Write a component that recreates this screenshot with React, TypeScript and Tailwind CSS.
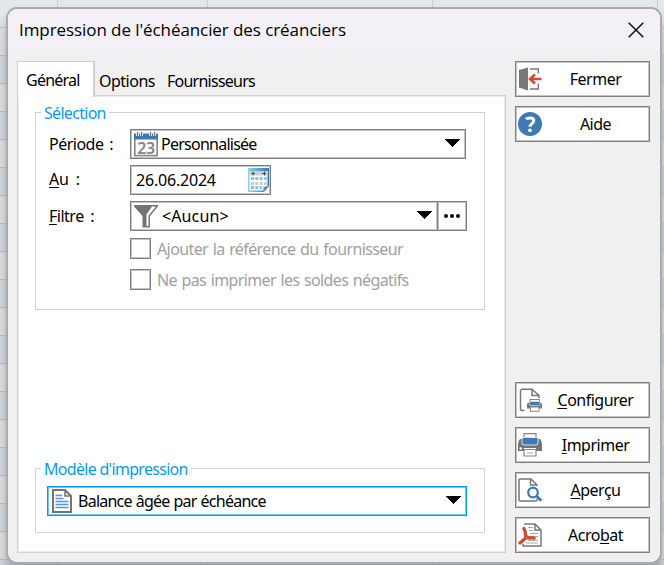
import { ReactNode } from "react";

const ui = "font-['Noto_Sans','Open_Sans',sans-serif]";
const rows = Array.from({ length: 21 }, (_, i) => i);

function Backdrop() {
  return (
    <div className="absolute inset-0 overflow-hidden bg-[#dfe5e8]">
      {rows.map((i) => (
        <div
          key={i}
          className={
            "h-7 border-b border-dotted border-[#b9bcbf] " +
            (i === 0 ? "bg-[#e2e9ec]" : i % 2 ? "bg-[#e8e8e8]" : "bg-[#dae0e6]")
          }
        />
      ))}
      <div className="absolute inset-y-0 left-[57px] w-px bg-[#c9ced2]" />
      <div className="absolute inset-y-0 left-[207px] w-px bg-[#c9ced2]" />
      <div className="absolute inset-y-0 left-[432px] w-px bg-[#c9ced2]" />
      <div className="absolute inset-y-0 left-[657px] w-px bg-[#c9ced2]" />
    </div>
  );
}

function ExitIcon() {
  return (
    <svg width="24" height="24" viewBox="0 0 24 24" className="shrink-0">
      <path d="M1 3 L10 0.5 V23.5 L1 20.5Z" fill="#777" />
      <path d="M12 2h8.300v4.500M12 22h8.300v-5.500" fill="none" stroke="#777" strokeWidth="1.400" />
      <path d="M12 12h11.500M17 7.500l-5 4.500 5 4.500" fill="none" stroke="#d14b32" strokeWidth="2.600" />
    </svg>
  );
}
function HelpIcon() {
  return (
    <svg width="24" height="24" viewBox="0 0 24 24" className="shrink-0">
      <circle cx="12" cy="12" r="12" fill="#3e78b5" />
      <path d="M8 7.200C9.500 5.800 15.800 5 15.800 8.800c0 2.900-3.800 2.800-3.800 6" fill="none" stroke="#fff" strokeWidth="3" />
      <circle cx="12" cy="18.300" r="1.900" fill="#fff" />
    </svg>
  );
}
function ConfigIcon() {
  return (
    <svg width="24" height="24" viewBox="0 0 24 24" className="shrink-0">
      <path d="M6.500 22.500H4Q2.500 22.500 2.500 21V3Q2.500 1.200 4 1.200H14L21 7.500V10M14 1.200V7.500H21" fill="none" stroke="#777" strokeWidth="1.500" />
      <path d="M11 14.500h11q2 0 2 2v4h-15v-4q0-2 2-2z" fill="#777" />
      <rect x="12" y="11.500" width="9.500" height="3" fill="#fff" stroke="#888" />
      <path d="M11.500 13.500h10.500v2.500q0 1.500-1.500 1.500h-7.500q-1.500 0-1.500-1.500z" fill="#3e78b5" stroke="#fff" strokeWidth=".5" />
      <rect x="12.500" y="19" width="8.500" height="4.300" fill="#fff" stroke="#888" />
    </svg>
  );
}
function PrintIcon() {
  return (
    <svg width="24" height="24" viewBox="0 0 24 24" className="shrink-0">
      <path d="M2 6h20q2 2 2 5v7h-6v-3H6v3H0v-7q0-3 2-5z" fill="#747474" />
      <path d="M6 .7h12v4H6z" fill="#fff" stroke="#858585" strokeWidth="1.200" />
      <path d="M4 4.500h16v5.500q0 2-2 2H6q-2 0-2-2z" fill="#3e78b5" stroke="#fff" strokeWidth=".8" />
      <circle cx="2.700" cy="15.500" r="1.200" fill="#fff" />
      <path d="M6 16.500h12v6.500H6z" fill="#fff" stroke="#858585" strokeWidth="1.200" />
      <path d="M9 20h6" stroke="#aaa" />
    </svg>
  );
}
function PreviewIcon() {
  return (
    <svg width="24" height="24" viewBox="0 0 24 24" className="shrink-0">
      <path d="M19 8V7L13 1H2Q1 1 1 2V22Q1 23 2 23H18Q19 23 19 22V21M12.500 1V7H19" fill="none" stroke="#777" strokeWidth="1.500" />
      <circle cx="15" cy="14.500" r="4.800" fill="#fff" stroke="#3e78b5" strokeWidth="2.200" />
      <path d="M18.500 18l4.800 4.800" stroke="#3e78b5" strokeWidth="2.800" />
    </svg>
  );
}
function PdfIcon() {
  return (
    <svg width="24" height="24" viewBox="0 0 24 24" className="shrink-0">
      <path d="M5 1H17L23 7V23H5z" fill="#fff" />
      <path d="M6 1H17L23 7V23H5V21M17 1V7H23" fill="none" stroke="#777" strokeWidth="1.500" />
      <path d="M10 4.500h5M11 7.500h4M12 10.500h8M15 13.500h5M10 17.500h10M8 20h12" stroke="#aaa" />
      <path d="M7.500 11.500C9 14 10.500 14.500 12 15C9.500 15 7 16 5.500 17C7 14.500 7.500 13 7.500 11.500z" fill="#fff" stroke="#d14b32" strokeWidth="2" strokeLinejoin="round" />
      <path d="M7.500 12Q7.500 8 6 5.500M11.500 15Q14 14.500 16 15.200M5.500 17L2 20" fill="none" stroke="#d14b32" strokeWidth="3.400" strokeLinecap="round" />
    </svg>
  );
}
function DayIcon() {
  return (
    <svg width="24" height="26" viewBox="0 0 24 26" className="shrink-0">
      <rect x=".8" y="4" width="22.400" height="20.600" fill="#fff" stroke="#858585" strokeWidth="1.600" />
      <rect y="2.500" width="24" height="6" fill="#3e78b5" />
      <path d="M3.500 1v4M7.500 1v4M16.500 1v4M20.500 1v4" stroke="#fff" strokeWidth="2.800" />
      <path d="M3.500 1v4M7.500 1v4M16.500 1v4M20.500 1v4" stroke="#777" strokeWidth="1.300" />
      <text x="12" y="22.500" textAnchor="middle" fontFamily="Noto Sans" fontWeight="600" fontSize="16" fill="#858585">23</text>
    </svg>
  );
}
function FunnelIcon() {
  return (
    <svg width="24" height="24" viewBox="0 0 24 24" className="shrink-0">
      <path d="M0 1H24V2.500L16 12V23.500H8.500V12L0 2.500Z" fill="#747474" />
      <path d="M18 2.500H22L14.500 11.500V22H12.500V10.500Z" fill="#fff" />
    </svg>
  );
}
function DatePickerIcon() {
  return (
    <svg width="22" height="24" viewBox="0 0 22 24" className="shrink-0">
      <defs>
        <linearGradient id="frame" x1="0" y1="0" x2="1" y2="0">
          <stop offset="0" stopColor="#8ed4e8" />
          <stop offset="1" stopColor="#2f77bd" />
        </linearGradient>
      </defs>
      <path d="M0 0H21V18L16 24H0Z" fill="url(#frame)" />
      <path d="M1.500 3H19.500V18L15 22.500H1.500Z" fill="#fff" />
      <rect x="1.500" y="3" width="18" height="4.500" fill="#cfcfcf" />
      <path d="M3.500 5.500h3.500M14 5.500h4M5 3.500v4M16.500 3.500v4" stroke="#444" />
      <path d="M3 10.500h16" stroke="#94bbf8" strokeWidth="3" strokeDasharray="3 1.300" />
      <path d="M3 15.500h16" stroke="#cecece" strokeWidth="3" strokeDasharray="3 1.300" />
      <path d="M3 19.500h11" stroke="#94bbf8" strokeWidth="3" strokeDasharray="3 1.300" />
      <path d="M14 23q2-1 1.500-4.500 3 .5 5-1z" fill="#777" />
    </svg>
  );
}
function DocIcon() {
  return (
    <svg width="20" height="24" viewBox="0 0 20 24" className="shrink-0">
      <path d="M1 1H13L19 7V23H1Z" fill="#fff" stroke="#747474" strokeWidth="2" />
      <path d="M13 1V7H19" fill="none" stroke="#747474" strokeWidth="1.600" />
      <path d="M3.500 6.500h6.500M3.500 9.500h8M3.500 12.500h13M3.500 15.500h13M3.500 18.500h13" stroke="#5a92c8" strokeWidth="1.700" />
    </svg>
  );
}
function Arrow() {
  return (
    <svg width="16" height="10" viewBox="0 0 16 10" shapeRendering="crispEdges" className="shrink-0">
      <path d="M0 0H16L8 8Z" fill="#000" />
    </svg>
  );
}

function SideButton({ icon, children }: { icon: ReactNode; children: ReactNode }) {
  return (
    <button className="flex h-9 w-[135px] shrink-0 items-center border border-[#808080] bg-white pl-[2px] shadow-[inset_0_0_0_1px_#c4c4c4]">
      {icon}
      <span className="flex-1 text-center">{children}</span>
    </button>
  );
}

const box = "flex items-center border border-[#7f7f7f] bg-white shadow-[inset_0_0_0_1px_#c4c4c4]";

function Group({ title, className, children }: { title: string; className: string; children: ReactNode }) {
  return (
    <section className={"relative border border-[#d0d0d0] " + className}>
      <h2 className="absolute -top-[11px] left-[5px] bg-white px-[3px] leading-[22px] tracking-[-0.700px] whitespace-nowrap text-[#0a9be3]">
        {title}
      </h2>
      {children}
    </section>
  );
}

export default function App() {
  return (
    <main className="relative h-[565px] w-[664px] overflow-hidden">
      <Backdrop />
      <div className={"absolute top-[7px] left-[6px] flex h-[557px] w-[656px] flex-col overflow-hidden rounded-[11px] border-2 border-[#a9acae] bg-[#f0f0f0] text-[16px] tracking-[-0.500px] text-black shadow-[0_12px_14px_rgba(0,0,0,0.300)] " + ui}>
        <header className="flex h-[43px] shrink-0 items-center justify-between bg-[#f3f0f8] pr-[16px] pb-[2px] pl-[11px]">
          <h1 className="font-['Open_Sans','Noto_Sans',sans-serif] text-[17px] tracking-[-0.080px]">
            Impression de l'échéancier des créanciers
          </h1>
          <svg width="16" height="16" viewBox="0 0 16 16">
            <path d="M.7.7l14.600 14.600M15.300.7L.7 15.300" stroke="#111" strokeWidth="1.500" />
          </svg>
        </header>
        <div className="flex flex-1 pt-[9px] pl-[9px]">
          <div className="flex w-[489px] flex-col">
            <nav className="z-10 flex h-[34px]">
              <div className="-mb-[2px] h-[36px] w-[78px] border border-r-2 border-b-0 border-[#d0d0d0] bg-white pt-[6px] pl-[8px] leading-[24px] tracking-[-0.750px]">Général</div>
              <div className="pt-[8px] pl-[4px] leading-[24px]">Options</div>
              <div className="pt-[8px] pl-[12px] leading-[24px] tracking-[-0.750px]">Fournisseurs</div>
            </nav>
            <div className="h-[458px] border border-[#d0d0d0] bg-white pt-[16px] pl-[17px] shadow-[inset_0_0_0_1px_#ececec]">
              <Group title="Sélection" className="h-[198px] w-[450px] pt-[16px] pl-[13px]">
                <div className="flex h-[30px] items-center">
                  <label className="w-[81px] [word-spacing:2px]">Période :</label>
                  <div className={box + " h-[30px] w-[336px] pr-[5px] pl-[3px]"}>
                    <DayIcon />
                    <span className="flex-1 pl-[3px] tracking-[-0.750px]">Personnalisée</span>
                    <Arrow />
                  </div>
                </div>
                <div className="mt-[6px] flex h-[30px] items-center">
                  <label className="w-[81px] pb-[3px] tracking-[-0.200px] [word-spacing:3px]"><u className="underline-offset-2">A</u>u :</label>
                  <div className={box + " h-[30px] w-[141px] pl-[5px]"}>
                    <span className="w-[112px] tracking-[-0.200px]">26.06.2024</span>
                    <DatePickerIcon />
                  </div>
                </div>
                <div className="mt-[6px] flex h-[30px] items-center">
                  <label className="w-[81px] [word-spacing:3px]"><u className="underline-offset-2">F</u>iltre :</label>
                  <div className={box + " h-[30px] w-[308px] pr-[5px] pl-[3px]"}>
                    <FunnelIcon />
                    <span className="flex-1 pl-[4px] tracking-[0.120px]">&lt;Aucun&gt;</span>
                    <Arrow />
                  </div>
                  <button className={box + " -ml-px h-[30px] w-[30px] justify-center gap-[2px]"}>
                    <i className="size-1 rounded-full bg-black" />
                    <i className="size-1 rounded-full bg-black" />
                    <i className="size-1 rounded-full bg-black" />
                  </button>
                </div>
                <div className="mt-[7px] ml-[81px] flex h-[21px] items-center tracking-[-0.600px] text-[#a0a0a0] [word-spacing:1px]">
                  <span className={box + " size-[21px]"} />
                  <span className="pl-[6px]">Ajouter la référence du fournisseur</span>
                </div>
                <div className="mt-[10px] ml-[81px] flex h-[21px] items-center tracking-[-0.620px] text-[#a0a0a0] [word-spacing:1px]">
                  <span className={box + " size-[21px]"} />
                  <span className="pl-[6px]">Ne pas imprimer les soldes négatifs</span>
                </div>
              </Group>
              <Group title="Modèle d'impression" className="mt-[158px] h-[65px] w-[450px] pt-[17px] pl-[11px]">
                <div className="flex h-[30px] w-[420px] items-center border border-[#05a0e8] bg-white pr-[5px] pl-[4px] shadow-[inset_0_0_0_1px_#70c8f2]">
                  <DocIcon />
                  <span className="flex-1 pl-[6px] tracking-[-0.750px] [word-spacing:0.500px]">Balance âgée par échéance</span>
                  <Arrow />
                </div>
              </Group>
            </div>
          </div>
          <aside className="flex flex-col gap-[9px] pl-[9px]">
            <SideButton icon={<ExitIcon />}>Fermer</SideButton>
            <SideButton icon={<HelpIcon />}>Aide</SideButton>
            <div className="h-[222px] shrink-0" />
            <SideButton icon={<ConfigIcon />}><u className="underline-offset-2">C</u>onfigurer</SideButton>
            <SideButton icon={<PrintIcon />}><u className="underline-offset-2">I</u>mprimer</SideButton>
            <SideButton icon={<PreviewIcon />}><u className="underline-offset-2">A</u>perçu</SideButton>
            <SideButton icon={<PdfIcon />}>Acro<u className="underline-offset-2">b</u>at</SideButton>
          </aside>
        </div>
      </div>
    </main>
  );
}
